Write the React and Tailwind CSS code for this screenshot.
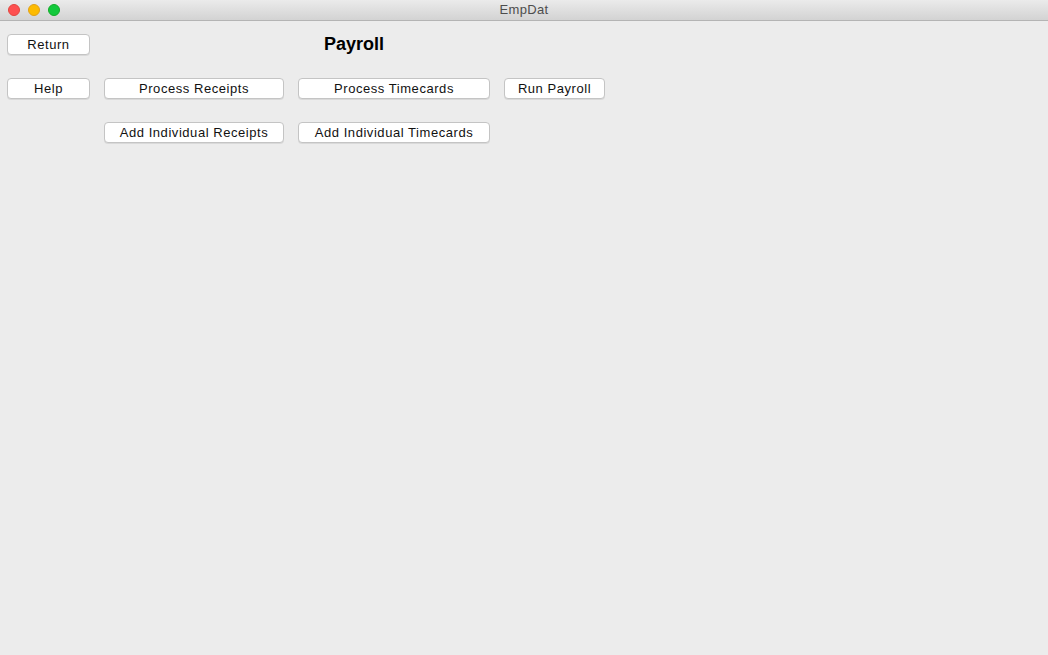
import React from "react";

function Btn({ children, className = "" }) {
  return (
    <button
      className={
        "h-[21px] rounded-[4px] border border-[#c4c4c4] bg-white text-[13px] leading-none tracking-[0.55px] text-[#111] shadow-[0_1px_0_rgba(0,0,0,0.08)] " +
        className
      }
      style={{ fontFamily: '"Liberation Sans", Arial, sans-serif' }}
    >
      {children}
    </button>
  );
}

export default function App() {
  return (
    <div
      className="flex h-[655px] w-[1048px] flex-col overflow-hidden bg-[#ececec]"
      style={{ fontFamily: '"Liberation Sans", Arial, sans-serif' }}
    >
      <div className="relative flex h-[21px] shrink-0 items-center border-b border-[#b4b4b4] bg-gradient-to-b from-[#ebebeb] to-[#d3d3d3]">
        <div className="flex items-center gap-[8px] pl-[8px]">
          <span className="h-[12px] w-[12px] rounded-full border border-[#e2463f] bg-[#fe5050]" />
          <span className="h-[12px] w-[12px] rounded-full border border-[#e1a116] bg-[#fdbb00]" />
          <span className="h-[12px] w-[12px] rounded-full border border-[#12ac28] bg-[#12c93c]" />
        </div>
        <div className="absolute inset-x-0 top-0 flex h-[20px] items-center justify-center text-[13px] tracking-[0.3px] text-[#4d4d4d]">
          EmpDat
        </div>
      </div>
      <div className="grid grid-cols-[83px_180px_192px_101px] gap-x-[14px] gap-y-[23px] pl-[7px] pt-[13px]">
        <Btn>Return</Btn>
        <div className="col-span-2 flex h-[21px] items-center pl-[220px] text-[18px] font-bold text-black">
          Payroll
        </div>
        <div />
        <Btn>Help</Btn>
        <Btn>Process Receipts</Btn>
        <Btn>Process Timecards</Btn>
        <Btn>Run Payroll</Btn>
        <div />
        <Btn>Add Individual Receipts</Btn>
        <Btn>Add Individual Timecards</Btn>
      </div>
    </div>
  );
}
